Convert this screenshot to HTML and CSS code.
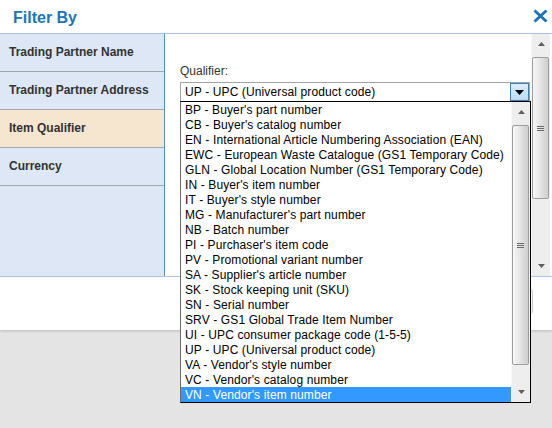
FILE: index.html
```html
<!DOCTYPE html>
<html>
<head>
<meta charset="utf-8">
<title>Filter By</title>
<link rel="stylesheet" href="styles.css">
</head>
<body>
<div class="dialog">
  <div class="header">
    <h1 class="title">Filter By</h1>
    <span class="close"><svg width="15" height="14" viewBox="0 0 15 14"><path d="M1.5 1.5 L13.5 12.5 M13.5 1.5 L1.5 12.5" stroke="#1b75bb" stroke-width="3" fill="none"/></svg></span>
  </div>
  <div class="main">
    <ul class="side">
      <li class="side-item">Trading Partner Name</li>
      <li class="side-item">Trading Partner Address</li>
      <li class="side-item is-active">Item Qualifier</li>
      <li class="side-item">Currency</li>
    </ul>
    <div class="content">
      <div class="pane">
        <label class="label">Qualifier:</label>
        <div class="combo">
          <div class="select">
            <span class="select-text">UP - UPC (Universal product code)</span>
            <span class="select-btn"><svg width="9" height="5" viewBox="0 0 9 5"><path d="M0 0 H9 L4.5 5 Z" fill="#000"/></svg></span>
          </div>
          <div class="listbox">
            <ul class="options">
              <li class="option">BP - Buyer's part number</li>
              <li class="option">CB - Buyer's catalog number</li>
              <li class="option">EN - International Article Numbering Association (EAN)</li>
              <li class="option">EWC - European Waste Catalogue (GS1 Temporary Code)</li>
              <li class="option">GLN - Global Location Number (GS1 Temporary Code)</li>
              <li class="option">IN - Buyer's item number</li>
              <li class="option">IT - Buyer's style number</li>
              <li class="option">MG - Manufacturer's part number</li>
              <li class="option">NB - Batch number</li>
              <li class="option">PI - Purchaser's item code</li>
              <li class="option">PV - Promotional variant number</li>
              <li class="option">SA - Supplier's article number</li>
              <li class="option">SK - Stock keeping unit (SKU)</li>
              <li class="option">SN - Serial number</li>
              <li class="option">SRV - GS1 Global Trade Item Number</li>
              <li class="option">UI - UPC consumer package code (1-5-5)</li>
              <li class="option">UP - UPC (Universal product code)</li>
              <li class="option">VA - Vendor's style number</li>
              <li class="option">VC - Vendor's catalog number</li>
              <li class="option is-selected">VN - Vendor's item number</li>
            </ul>
            <div class="sb">
              <span class="sb-btn"><svg width="7" height="4" viewBox="0 0 7 4"><path d="M0 4 H7 L3.5 0 Z" fill="#5e5e5e"/></svg></span>
              <span class="sb-thumb sb-thumb-list"><svg width="7" height="5" viewBox="0 0 7 5"><path d="M0 0.5 H7 M0 2.5 H7 M0 4.5 H7" stroke="#6a6a6a" stroke-width="1"/></svg></span>
              <span class="sb-track"></span>
              <span class="sb-btn"><svg width="7" height="4" viewBox="0 0 7 4"><path d="M0 0 H7 L3.5 4 Z" fill="#5e5e5e"/></svg></span>
            </div>
          </div>
        </div>
      </div>
      <div class="sb sb-pane">
        <span class="sb-btn"><svg width="7" height="4" viewBox="0 0 7 4"><path d="M0 4 H7 L3.5 0 Z" fill="#5e5e5e"/></svg></span>
        <span class="sb-thumb sb-thumb-pane"><svg width="7" height="5" viewBox="0 0 7 5"><path d="M0 0.5 H7 M0 2.5 H7 M0 4.5 H7" stroke="#6a6a6a" stroke-width="1"/></svg></span>
        <span class="sb-track"></span>
        <span class="sb-btn"><svg width="7" height="4" viewBox="0 0 7 4"><path d="M0 0 H7 L3.5 4 Z" fill="#5e5e5e"/></svg></span>
      </div>
    </div>
  </div>
  <div class="footer">
    <span class="btn"></span>
  </div>
</div>
</body>
</html>
```

FILE: styles.css
```css
* { box-sizing: border-box; }
html, body { margin: 0; padding: 0; }
html { background: #e4e4e4; }
body {
  min-height: 428px;
  background: #e4e4e4;
  font-family: "Liberation Sans", Arial, sans-serif;
  font-size: 12px;
  color: #333;
}
.dialog {
  position: relative;
  width: 552px;
  height: 330px;
  background: #fff;
  box-shadow: 0 1px 3px rgba(0,0,0,0.18);
  display: flex;
  flex-direction: column;
}
.header {
  height: 34px;
  flex: none;
  border-bottom: 1px solid #a9c2e4;
  display: flex;
  align-items: center;
  justify-content: space-between;
  padding: 0 4px 0 13px;
}
.title {
  margin: 2px 0 0 0;
  font-size: 16px;
  line-height: 18px;
  font-weight: bold;
  color: #1b75bb;
}
.close { display: flex; margin-top: -1px; }
.main {
  height: 243px;
  flex: none;
  border-bottom: 1px solid #a9c2e4;
  display: flex;
}
.side {
  list-style: none;
  margin: 0;
  padding: 0;
  width: 165px;
  flex: none;
  background: #dde7f5;
  border-right: 1px solid #5a8fcc;
}
.side-item {
  height: 38px;
  border-bottom: 1px solid #a2a6ad;
  padding: 0 0 1px 9px;
  display: flex;
  align-items: center;
  font-weight: bold;
  font-size: 12px;
  color: #333;
}
.side-item.is-active { background: #f6e5cf; }
.content {
  flex: 1;
  display: flex;
  padding-right: 2px;
}
.pane {
  flex: 1;
  padding: 30px 0 0 15px;
}
.label {
  display: block;
  line-height: 14px;
  height: 14px;
  margin-bottom: 4px;
  color: #333;
}
.combo { position: relative; width: 351px; z-index: 5; }
.select {
  width: 350px;
  height: 20px;
  border: 1px solid #a3a3a3;
  display: flex;
  background: #fff;
}
.select-text {
  flex: 1;
  line-height: 18px;
  padding-left: 4px;
  color: #000;
  letter-spacing: 0.12px;
}
.select-btn {
  width: 19px;
  height: 18px;
  border: 1px solid #3c7fb1;
  background: linear-gradient(#dcecfc, #bcdcf4);
  display: flex;
  align-items: center;
  justify-content: center;
}
.listbox {
  position: absolute;
  top: 19px;
  left: 0;
  width: 351px;
  height: 302px;
  border: 1px solid #000;
  border-left-color: #6a6a6a;
  background: #fff;
  display: flex;
}
.options {
  list-style: none;
  margin: 0;
  padding: 0;
  flex: 1;
}
.option {
  height: 15px;
  line-height: 14px;
  padding: 1px 0 0 4px;
  white-space: nowrap;
  overflow: hidden;
  color: #000;
  letter-spacing: 0.12px;
}
.option.is-selected { background: #3399ff; color: #fff; }
.sb {
  width: 19px;
  flex: none;
  background: #eeeeee;
  display: flex;
  flex-direction: column;
  border-left: 1px solid #f8f8f8;
}
.sb-btn {
  height: 20px;
  flex: none;
  display: flex;
  align-items: center;
  justify-content: center;
}
.sb-thumb {
  flex: none;
  margin: 3px 1px 0 0;
  border: 1px solid #9d9d9d;
  border-radius: 2px;
  background: linear-gradient(to right, #f6f6f6, #e6e6e6 45%, #d6d6d6 80%, #cfcfcf);
  display: flex;
  align-items: center;
  justify-content: center;
}
.sb-thumb-list { height: 240px; }
.sb-thumb-pane { height: 142px; }
.sb-track { flex: 1; }
.footer {
  flex: 1;
  display: flex;
  justify-content: flex-end;
  padding: 12px 19px 0 0;
}
.btn {
  width: 72px;
  height: 25px;
  border: 1px solid #c6c6c6;
  border-radius: 3px;
  background: linear-gradient(#ffffff, #f0f0f0);
}
```
